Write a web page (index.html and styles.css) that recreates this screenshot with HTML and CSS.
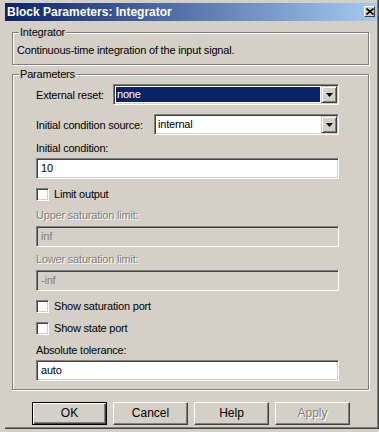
FILE: index.html
```html
<!DOCTYPE html>
<html>
<head>
<meta charset="utf-8">
<link rel="stylesheet" href="styles.css">
</head>
<body>
<div class="window">
  <div class="titlebar">
    <span class="title">Block Parameters: Integrator</span>
    <span class="close"><svg width="8" height="7" viewBox="0 0 8 7"><path d="M0.5 0.5L7.5 6.5M7.5 0.5L0.5 6.5" stroke="#000" stroke-width="1.6" fill="none"/></svg></span>
  </div>
  <div class="content">
    <div class="group g-info">
      <span class="legend">Integrator</span>
      <div class="desc">Continuous-time integration of the input signal.</div>
    </div>
    <div class="group g-params">
      <span class="legend">Parameters</span>
      <div class="row">
        <span class="lbl">External reset:</span>
        <div class="select sel-reset"><span class="val hl">none</span><span class="drop"><svg width="7" height="4" viewBox="0 0 7 4"><path d="M0 0H7L3.5 4Z" fill="#000"/></svg></span></div>
      </div>
      <div class="row mt9">
        <span class="lbl">Initial condition source:</span>
        <div class="select sel-source"><span class="val">internal</span><span class="drop"><svg width="7" height="4" viewBox="0 0 7 4"><path d="M0 0H7L3.5 4Z" fill="#000"/></svg></span></div>
      </div>
      <div class="label mt6">Initial condition:</div>
      <div class="field mt3">10</div>
      <div class="checkrow mt8"><span class="check"></span><span>Limit output</span></div>
      <div class="label disabled mt7">Upper saturation limit:</div>
      <div class="field off mt4">inf</div>
      <div class="label disabled mt5">Lower saturation limit:</div>
      <div class="field off mt4">-inf</div>
      <div class="checkrow mt8"><span class="check"></span><span>Show saturation port</span></div>
      <div class="checkrow mt8"><span class="check"></span><span>Show state port</span></div>
      <div class="label mt8">Absolute tolerance:</div>
      <div class="field mt3">auto</div>
    </div>
    <div class="buttons">
      <div class="btn default">OK</div>
      <div class="btn">Cancel</div>
      <div class="btn">Help</div>
      <div class="btn disabled">Apply</div>
    </div>
  </div>
</div>
</body>
</html>
```
FILE: styles.css
```css
html, body {
  margin: 0;
  padding: 0;
}
body {
  background: #d4d0c8;
  font-family: "Liberation Sans", Arial, sans-serif;
  font-size: 11px;
  letter-spacing: -0.2px;
  color: #000;
  width: 379px;
  height: 432px;
  overflow: hidden;
}
.window {
  margin-left: 5px;
  width: 374px;
  height: 429px;
  box-sizing: border-box;
  border-right: 1px solid #404040;
  border-bottom: 1px solid #404040;
  box-shadow: inset -1px -1px 0 #808080;
  padding: 3px 1px 0 0;
  display: flex;
  flex-direction: column;
}
.titlebar {
  height: 18px;
  display: flex;
  align-items: center;
  justify-content: space-between;
  padding-left: 2px;
  background: linear-gradient(to right, #0a246a, #a6caf0);
  color: #fff;
  font-weight: bold;
  font-size: 12px;
  letter-spacing: 0;
}
.close {
  width: 11px;
  height: 11px;
  margin-right: 2px;
  margin-top: -1px;
  box-sizing: border-box;
  background: #d4d0c8;
  border: 1px solid;
  border-color: #fff #404040 #404040 #fff;
  display: flex;
  align-items: center;
  justify-content: center;
}
.content {
  padding: 0 8px 0 7px;
  display: flex;
  flex-direction: column;
}
.group {
  position: relative;
  border: 1px solid #808080;
  box-shadow: inset 1px 1px 0 #fff, 1px 1px 0 #fff;
}
.legend {
  position: absolute;
  top: -7px;
  left: 6px;
  padding: 0 1px;
  line-height: 13px;
  background: #d4d0c8;
}
.g-info {
  margin-top: 11px;
  padding: 10px 4px 7px;
}
.desc {
  line-height: 14px;
}
.g-params {
  margin-top: 9px;
  padding: 9px 29px 8px 23px;
  display: flex;
  flex-direction: column;
}
.row {
  display: flex;
  align-items: center;
  height: 21px;
}
.lbl {
  line-height: 14px;
}
.select {
  margin-left: auto;
  height: 21px;
  box-sizing: border-box;
  display: flex;
  background: #fff;
  border: 1px solid;
  border-color: #808080 #fff #fff #808080;
  box-shadow: inset 1px 1px 0 #404040, inset -1px -1px 0 #d4d0c8;
  padding: 1px;
}
.sel-reset { width: 226px; }
.sel-source { width: 185px; }
.val {
  flex: 1;
  margin: 1px;
  padding-left: 1px;
  line-height: 15px;
}
.val.hl {
  background: #0a246a;
  color: #fff;
}
.drop {
  width: 16px;
  height: 17px;
  box-sizing: border-box;
  background: #d4d0c8;
  border: 1px solid;
  border-color: #d4d0c8 #404040 #404040 #d4d0c8;
  box-shadow: inset 1px 1px 0 #fff, inset -1px -1px 0 #808080;
  display: flex;
  align-items: center;
  justify-content: center;
}
.label {
  line-height: 14px;
}
.label.disabled {
  color: #808080;
  text-shadow: 1px 1px 0 #fff;
}
.field {
  height: 21px;
  box-sizing: border-box;
  background: #fff;
  border: 1px solid;
  border-color: #808080 #fff #fff #808080;
  box-shadow: inset 1px 1px 0 #404040, inset -1px -1px 0 #d4d0c8;
  padding-left: 4px;
  line-height: 19px;
}
.field.off {
  background: #d4d0c8;
  color: #808080;
}
.checkrow {
  display: flex;
  align-items: center;
  height: 14px;
}
.check {
  width: 13px;
  height: 13px;
  box-sizing: border-box;
  background: #fff;
  border: 1px solid;
  border-color: #808080 #fff #fff #808080;
  box-shadow: inset 1px 1px 0 #404040, inset -1px -1px 0 #d4d0c8;
  margin-right: 5px;
}
.mt3 { margin-top: 3px; }
.mt4 { margin-top: 4px; }
.mt5 { margin-top: 5px; }
.mt6 { margin-top: 6px; }
.mt7 { margin-top: 7px; }
.mt8 { margin-top: 8px; }
.mt9 { margin-top: 9px; }
.buttons {
  margin-top: 12px;
  display: flex;
  justify-content: center;
  gap: 6px;
  padding-left: 1px;
}
.btn {
  width: 75px;
  height: 23px;
  box-sizing: border-box;
  background: #d4d0c8;
  border: 1px solid;
  border-color: #fff #404040 #404040 #fff;
  box-shadow: inset -1px -1px 0 #808080;
  text-align: center;
  line-height: 21px;
  font-size: 12px;
  letter-spacing: 0;
}
.btn.default {
  border-color: #000;
  box-shadow: inset 1px 1px 0 #fff, inset -1px -1px 0 #404040, inset -2px -2px 0 #808080;
}
.btn.disabled {
  color: #808080;
  text-shadow: 1px 1px 0 #fff;
}
```
